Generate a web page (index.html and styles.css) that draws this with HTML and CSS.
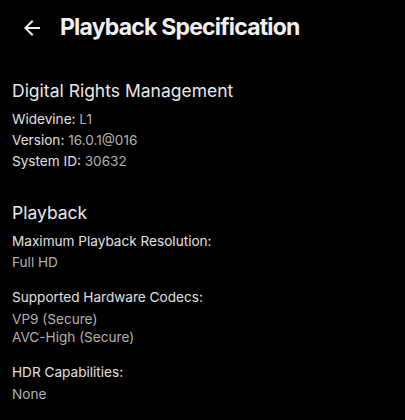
FILE: index.html
```html
<!DOCTYPE html>
<html lang="en">
<head>
<meta charset="utf-8">
<title>Playback Specification</title>
<link rel="stylesheet" href="styles.css">
</head>
<body>
<div class="screen">
  <header class="header">
    <svg class="back" viewBox="0 0 24 24" width="24" height="24" aria-hidden="true">
      <path d="M20 11H7.83l5.59-5.59L12 4l-8 8 8 8 1.41-1.41L7.83 13H20v-2z" fill="#ececec"/>
    </svg>
    <h1 class="title">Playback Specification</h1>
  </header>

  <section class="section section-drm">
    <h2 class="section-title">Digital Rights Management</h2>
    <div class="line"><span class="label">Widevine:</span> <span class="value">L1</span></div>
    <div class="line"><span class="label">Version:</span> <span class="value">16.0.1@016</span></div>
    <div class="line"><span class="label">System ID:</span> <span class="value">30632</span></div>
  </section>

  <section class="section section-playback">
    <h2 class="section-title">Playback</h2>
    <div class="group">
      <div class="line label">Maximum Playback Resolution:</div>
      <div class="values value">Full HD</div>
    </div>
    <div class="group">
      <div class="line label">Supported Hardware Codecs:</div>
      <div class="values value">VP9 (Secure)<br>AVC-High (Secure)</div>
    </div>
    <div class="group">
      <div class="line label">HDR Capabilities:</div>
      <div class="values value">None</div>
    </div>
  </section>
</div>
</body>
</html>
```

FILE: styles.css
```css
html, body {
  margin: 0;
  padding: 0;
  background: #000;
}

body {
  font-family: Inter, "Noto Sans", "Liberation Sans", sans-serif;
  color: #e6e6e6;
  width: 405px;
  height: 420px;
  overflow: hidden;
}

.screen {
  display: flex;
  flex-direction: column;
}

.header {
  display: flex;
  align-items: center;
  gap: 16px;
  height: 55px;
  padding-left: 20px;
}

.back {
  flex: none;
  display: block;
}

.title {
  margin: 0;
  font-size: 23px;
  font-weight: 700;
  line-height: 55px;
  color: #f0f0f0;
  letter-spacing: -0.8px;
}

.section {
  padding-left: 12px;
}

.section-drm {
  margin-top: 23.5px;
}

.section-playback {
  margin-top: 29px;
}

.section-title {
  margin: 0 0 6px;
  font-size: 17.5px;
  font-weight: 400;
  line-height: 24px;
  color: #e8e8e8;
}

.line {
  font-size: 13.6px;
  line-height: 21px;
}

.group .line {
  margin-bottom: 1.5px;
}

.values {
  font-size: 13.6px;
  line-height: 18.5px;
}

.label {
  color: #e0e0e0;
}

.value {
  color: #b0b0b0;
}

.group + .group {
  margin-top: 15.5px;
}
```
